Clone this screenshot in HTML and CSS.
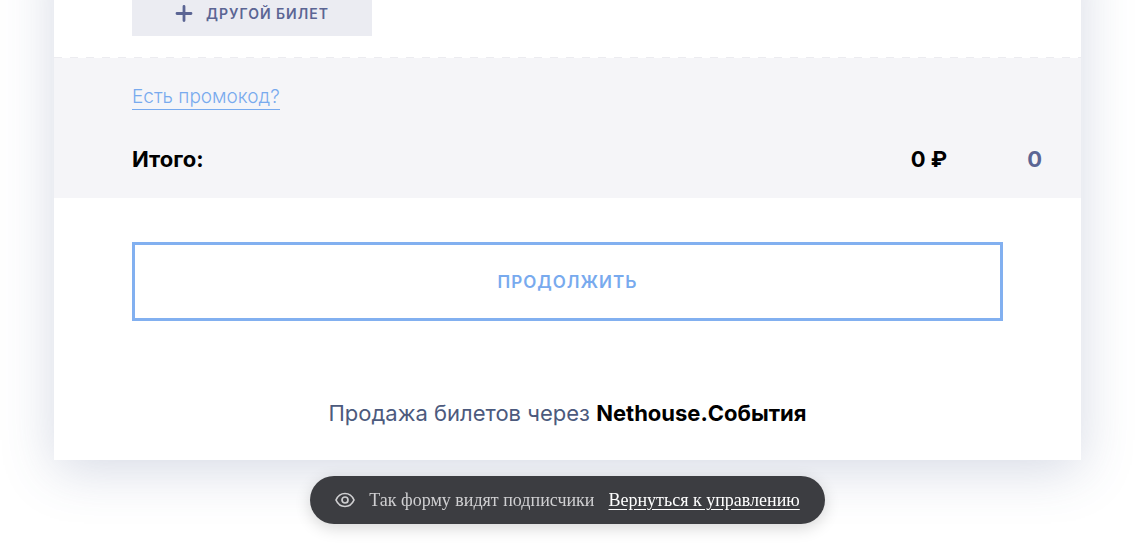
FILE: index.html
```
<!DOCTYPE html>
<html lang="ru">
  <head>
    <meta charset="UTF-8">
    <meta name="viewport" content="width=device-width, initial-scale=1.0">
    <title>Продажа билетов</title>
    <link rel="stylesheet" href="styles.css">
  </head>
  <body>
    <main class="widget">
      <div class="tickets">
        <button type="button" class="btn-add">
          <svg width="18" height="18" viewBox="0 0 18 18" fill="none" stroke="currentColor" stroke-width="2.8" stroke-linecap="round" aria-hidden="true">
            <path d="M9 1.500v14M2 8.500h14"/>
          </svg>
          Другой билет
        </button>
      </div>
      <section class="summary">
        <a href="#promo" class="promo">Есть промокод?</a>
        <div class="total">
          <span class="total-label">Итого:</span>
          <span class="total-sum">0 ₽</span>
          <span class="total-count">0</span>
        </div>
      </section>
      <div class="actions">
        <button type="button" class="btn-next">Продолжить</button>
      </div>
      <p class="powered">Продажа билетов через <a href="#nethouse">Nethouse.События</a></p>
    </main>
    <div class="preview-bar">
      <svg width="20" height="16" viewBox="0 0 20 16" fill="none" stroke="currentColor" stroke-width="1.7" aria-hidden="true">
        <path d="M1 8C3 3.500 6 1.500 10 1.500S17 3.500 19 8C17 12.500 14 14.500 10 14.500S3 12.500 1 8Z" stroke-linejoin="round"/>
        <circle cx="10" cy="8" r="3"/>
      </svg>
      <span>Так форму видят подписчики</span>
      <a href="#manage">Вернуться к управлению</a>
    </div>
  </body>
</html>
```
FILE: styles.css
```
* {
  box-sizing: border-box;
}
body {
  display: flow-root;
  min-height: 100vh;
  margin: 0;
  background: #fff;
  color: #000;
  font-family: Inter, "Liberation Sans", sans-serif;
}
.widget {
  margin: -60px 63px 0 54px;
  background: #fff;
  box-shadow: 0 10px 50px rgba(70, 85, 135, 0.22);
}
.tickets {
  padding: 52px 78px 21px;
}
.btn-add {
  display: flex;
  align-items: center;
  justify-content: center;
  gap: 13px;
  width: 240px;
  height: 44px;
  padding: 0;
  border: 0;
  background: #ebecf2;
  color: #5b6594;
  font: 600 14px/20px Inter, sans-serif;
  letter-spacing: 1px;
  text-transform: uppercase;
}
.summary {
  padding: 28px 39px 25px 78px;
  background:
    repeating-linear-gradient(90deg, #ececf0 0 8px, #fff 8px 16px) top / 100% 1px no-repeat,
    #f5f5f8;
}
.promo {
  display: inline-block;
  border-bottom: 1px solid #78aaee;
  color: #78aaee;
  font-size: 19px;
  font-weight: 300;
  line-height: 24px;
  text-decoration: none;
}
.total {
  display: flex;
  margin-top: 35px;
  font-size: 22px;
  font-weight: 700;
  line-height: 28px;
}
.total-label {
  flex: 1;
}
.total-count {
  width: 95px;
  color: #5b6594;
  text-align: right;
}
.actions {
  padding: 44px 78px 0;
}
.btn-next {
  width: 100%;
  height: 79px;
  border: 3px solid #82b0f0;
  background: #fff;
  color: #78aaee;
  font: 600 17px/24px Inter, sans-serif;
  letter-spacing: 1px;
  text-transform: uppercase;
}
.powered {
  margin: 0;
  padding: 78px 0 33px;
  color: #4c5a7d;
  font-size: 22px;
  line-height: 28px;
  text-align: center;
}
.powered a {
  color: #000;
  font-weight: 700;
  text-decoration: none;
}
.preview-bar {
  position: fixed;
  left: 0;
  right: 9px;
  bottom: 27px;
  display: flex;
  align-items: center;
  width: fit-content;
  height: 48px;
  margin: 0 auto;
  padding: 0 25px;
  border-radius: 24px;
  background: #3c3d41;
  box-shadow: 0 4px 16px rgba(0, 0, 0, 0.16);
  color: #cfcfd1;
  font: 18px/24px "Liberation Serif", serif;
  white-space: nowrap;
}
.preview-bar span {
  margin: 0 14px;
}
.preview-bar a {
  color: #fff;
  text-underline-offset: 3px;
}
```
